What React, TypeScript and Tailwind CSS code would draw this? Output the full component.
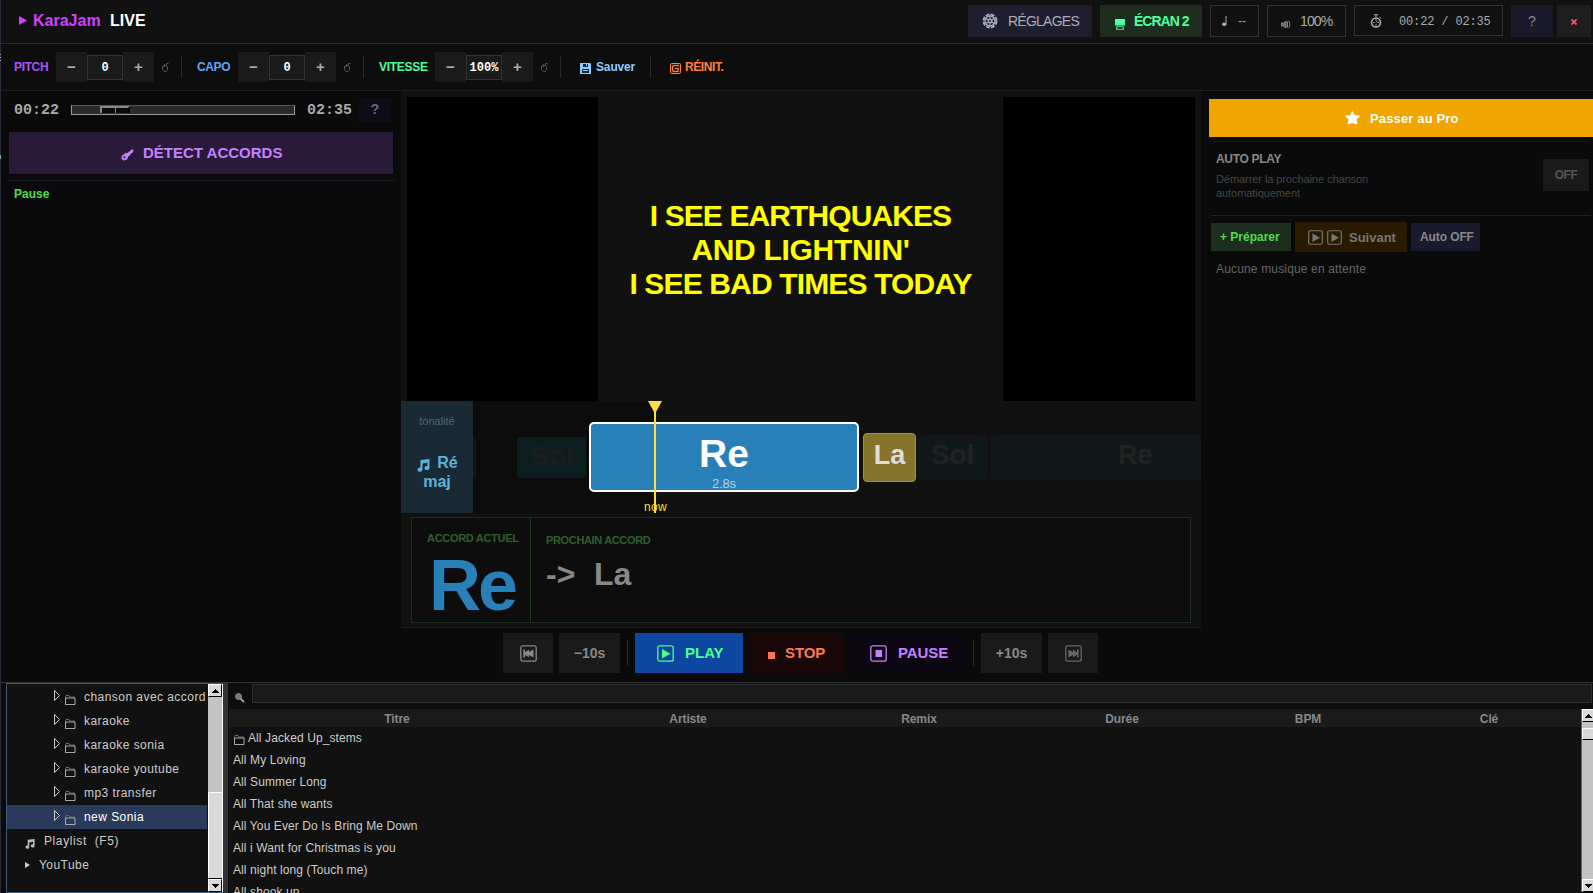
import React from "react";
import clsx from "clsx";

interface Track {
  title: string;
  folder?: boolean;
}

const FOLDERS = [
  "chanson avec accord",
  "karaoke",
  "karaoke sonia",
  "karaoke youtube",
  "mp3 transfer",
  "new Sonia",
];

const TRACKS: Track[] = [
  { title: "All Jacked Up_stems", folder: true },
  { title: "All My Loving" },
  { title: "All Summer Long" },
  { title: "All That she wants" },
  { title: "All You Ever Do Is Bring Me Down" },
  { title: "All i Want for Christmas is you" },
  { title: "All night long (Touch me)" },
  { title: "All shook up" },
];

const COLUMNS = ["Titre", "Artiste", "Remix", "Durée", "BPM", "Clé"];

const MONO = "font-['Liberation_Mono',monospace]";

/* ---------- icons ---------- */

function ResetIcon() {
  return (
    <svg width="7" height="9" viewBox="0 0 7 9" fill="none" stroke="#555" className="mt-px">
      <path d="M1.500 2.500H4.500V.5H6.500M4.500 2.500 5.500 3.500V6.500L4 8.500H2.500L.5 6.500V3.500H2.500V1" />
    </svg>
  );
}

function FlowerGearIcon() {
  return (
    <svg width="16" height="16" viewBox="0 0 16 16" fill="none" stroke="#aab">
      <circle cx="8" cy="8" r="6.500" strokeWidth="2" strokeDasharray="3.800 1.300" />
      <circle cx="8" cy="8" r="5" strokeWidth="1.300" />
      <circle cx="8" cy="8" r="1.800" strokeWidth="1.400" />
      <path d="M8 3v3.200M8 9.800V13M3.700 5.500l2.800 1.600M9.500 8.900l2.800 1.600M3.700 10.500l2.800-1.600M9.500 7.100l2.800-1.600" strokeWidth="1.200" />
    </svg>
  );
}

function ScreenIcon() {
  return (
    <svg width="10" height="11" viewBox="0 0 10 11" fill="#4dffa0">
      <path d="M0 0h10v6.500H0z" />
      <path d="M1.500 7h7v1h-7zM1 8h1.500v2h5V8H9v3H1z" opacity=".75" />
    </svg>
  );
}

function SpeakerIcon() {
  return (
    <svg width="10" height="9" viewBox="0 0 10 9" fill="none" stroke="#888">
      <path d="M.5 3h2L5 1v7L2.500 6h-2z" fill="#666" />
      <path d="M6.500 1.500v6M7.500 .8c1.800 1.500 1.800 6 0 7.400" />
    </svg>
  );
}

function StopwatchIcon() {
  return (
    <svg width="12" height="14" viewBox="0 0 12 14" fill="none" stroke="#aaa">
      <circle cx="6" cy="8.500" r="4.500" strokeWidth="1.600" />
      <path d="M4 .8h4M6 1v2.500M9.500 3l1.300 1.200M6 5v1.500M3 8.500h1.500M7.500 8.500H9M6 10.500V12M6 8.500l1.800-2" />
    </svg>
  );
}

function FloppyIcon() {
  return (
    <svg width="11" height="11" viewBox="0 0 11 11">
      <path d="M0 0h10l1 1v10H0z" fill="#8fcbff" />
      <path d="M3 1h5v3H3zM2 6h7v4H2z" fill="#14283c" />
      <path d="M6 1h1v2H6zM3 7h5v1H3z" fill="#8fcbff" />
    </svg>
  );
}

function ResetAllIcon() {
  return (
    <svg width="11" height="11" viewBox="0 0 11 11" fill="none" stroke="#ff8040">
      <rect x=".5" y=".5" width="10" height="10" rx="1" fill="#3a1c0c" />
      <path d="M9 2.500H3.500L2.500 3.500v4l1 1H8V5.500H5" strokeWidth="1.200" />
    </svg>
  );
}

function GuitarIcon() {
  return (
    <svg width="13" height="12" viewBox="0 0 13 12" fill="#c580ff">
      <path d="M12.500.800 11 .3 9.500 1.500 6 4.300 4.600 3.800 3.500 5 1.300 6.300.300 8.200l.5 2.200 2 1.200 2.400-.5L6.800 9.200l.4-1.700 1.300-.7L10 4.800l2-1.500z" />
      <circle cx="3.400" cy="8.300" r="1.200" fill="#5a3a7a" />
    </svg>
  );
}

function StarIcon() {
  return (
    <svg width="15" height="14" viewBox="0 0 15 14" fill="#fff" stroke="#fff" strokeWidth="1.400" strokeLinejoin="round">
      <path d="m7.500 1 1.900 3.700 4.600.6-3.200 3 .9 4.300-4.200-1.300-4.200 1.300.9-4.300-3.200-3 4.600-.6z" />
    </svg>
  );
}

function NoteIcon({ size, color }: { size: number; color: string }) {
  return (
    <svg width={size} height={size} viewBox="0 0 12 12" fill={color}>
      <path d="M3.200 1 11.500 0v8.300a2.300 1.900 0 1 1-1.900-1.800V3.300L5.100 4.200v5.600a2.300 1.900 0 1 1-1.900-1.800z" />
    </svg>
  );
}

function BoxedIcon({ color, kind, small }: { color: string; kind: "play" | "stop" | "prev" | "next"; small?: boolean }) {
  const s = small ? 15 : 17;
  return (
    <svg width={s} height={s} viewBox="0 0 17 17" fill={color} className="shrink-0">
      <rect x=".8" y=".8" width="15.400" height="15.400" rx="2" fill="none" stroke={color} strokeWidth="1.300" />
      {kind === "play" && <path d="M5 4v9.500l8.500-4.700z" />}
      {kind === "stop" && <path d="M5.500 5h6.500v7H5.500z" />}
      {kind === "prev" && <path d="M3.300 4.500h1.700v2.800L9 4.500v2.500l4.500-2.500v8L9 10v2.500L5 9.700v2.800H3.300z" />}
      {kind === "next" && <path d="M3.500 4.500 8 7V4.500l4 2.800V4.500h1.700v8H12V9.700l-4 2.800V10l-4.500 2.500z" />}
    </svg>
  );
}

function FolderIcon() {
  return (
    <svg width="11" height="10" viewBox="0 0 11 10" fill="none">
      <path d="M.5 9.500V1.500l.5-1h3l1 1.500h5" stroke="#666" />
      <path d="M.5 3h9.500v6.500H.5z" stroke="#aaa" />
    </svg>
  );
}

function MagnifierIcon() {
  return (
    <svg width="10" height="10" viewBox="0 0 10 10">
      <circle cx="3.500" cy="3.500" r="3" fill="#777" stroke="#888" />
      <path d="m5.500 5.500 3.500 3.700" stroke="#aaa" strokeWidth="1.800" />
    </svg>
  );
}

/* ---------- small parts ---------- */

function Divider() {
  return <div className="w-px h-[22px] bg-[#2a2a2a]" />;
}

function Stepper({ value }: { value: string }) {
  return (
    <div className="flex items-center ml-2">
      <div className="w-[31px] h-[30px] bg-[#1a1a1a] text-[#aaa] text-[15px] font-bold flex items-center justify-center">
        −
      </div>
      <div className={clsx(MONO, "w-9 h-[25px] pt-px bg-[#1a1a1a] border border-[#333] text-white text-[12px] font-bold flex items-center justify-center")}>
        {value}
      </div>
      <div className="w-[31px] h-[30px] bg-[#1a1a1a] text-[#aaa] text-[15px] font-bold flex items-center justify-center">
        +
      </div>
      <div className="w-[27px] pl-2">
        <ResetIcon />
      </div>
    </div>
  );
}

function ScrollArrow({ up, narrow }: { up?: boolean; narrow?: boolean }) {
  return (
    <div
      className={clsx(
        "h-[13px] shrink-0 bg-[#d9d9d9] border-t border-l border-t-white border-l-white border-b border-b-black flex items-center justify-center",
        !narrow && "border-r border-r-black"
      )}
    >
      <svg width="7" height="4" viewBox="0 0 7 4" fill="#000">
        <path d={up ? "M3 0h1v1h1v1h1v1h1v1H0V3h1V2h1V1h1z" : "M0 0h7v1H6v1H5v1H4v1H3V3H2V2H1V1H0z"} />
      </svg>
    </div>
  );
}

/* ---------- sections ---------- */

function Header() {
  return (
    <header className="h-11 shrink-0 bg-[#111] border-b border-[#2a2a2a] flex items-start pl-[18px] pr-[2px]">
      <div className="flex items-center h-[41px] text-[16px] font-bold">
        <svg width="8" height="9" viewBox="0 0 8 9" fill="#d040ff">
          <path d="M0 0v9l8-4.500z" />
        </svg>
        <span className="text-[#d040ff] ml-[6px] w-[77px]">KaraJam</span>
        <span className="text-white">LIVE</span>
      </div>
      <div className="flex ml-auto mt-[5px] h-8">
        <div className="w-[124px] h-8 mr-2 bg-[#1e1e2e] text-[#aab] text-[14px] flex items-center pl-[14px] gap-[10px] whitespace-nowrap">
          <FlowerGearIcon />
          <span className="tracking-[-0.75px]">RÉGLAGES</span>
        </div>
        <div className="w-[102px] h-8 mr-2 bg-[#1e2e1e] text-[#4dffa0] text-[14px] font-bold flex items-center pl-[15px] whitespace-nowrap">
          <span className="mt-[6px] mr-[9px]">
            <ScreenIcon />
          </span>
          <span className="tracking-[-1px]">ÉCRAN 2</span>
        </div>
        <div className="w-[49px] h-8 mr-2 border border-[#333] text-[#aaa] text-[12px] flex items-center pl-[11px]">
          <svg width="5" height="10" viewBox="0 0 5 10" fill="#aaa">
            <path d="M3.500 0h1v8.200A2.200 1.600 0 1 1 3.500 7z" />
          </svg>
          <span className="ml-[11px]">--</span>
        </div>
        <div className="w-[79px] h-8 mr-2 border border-[#333] text-[#aaa] text-[14px] flex items-center pl-[13px]">
          <span className="mt-[7px] mr-[9px]">
            <SpeakerIcon />
          </span>
          <span className="tracking-[-0.9px]">100%</span>
        </div>
        <div className={clsx(MONO, "w-[149px] h-[31px] mr-2 border border-[#333] text-[#aaa] text-[12px] flex items-center pl-[15px]")}>
          <StopwatchIcon />
          <span className="ml-[17px] mt-[2px] tracking-[-0.15px] whitespace-pre">00:22 / 02:35</span>
        </div>
        <div className="w-[42px] h-8 mr-1 bg-[#1a1a2a] text-[#888] text-[14px] flex items-center justify-center">?</div>
        <div className="w-[34px] h-8 bg-[#1e1e1e] flex items-center justify-center">
          <svg width="6" height="6" viewBox="0 0 6 6" stroke="#ff5555" strokeWidth="1.800" className="mt-px">
            <path d="m.5.5 5 5m0-5-5 5" />
          </svg>
        </div>
      </div>
    </header>
  );
}

function Toolbar() {
  return (
    <div className="h-[47px] shrink-0 bg-[#0d0d0d] border-b border-[#1e1e1e] flex items-center text-[12px] font-bold pl-[13px]">
      <span className="text-[#a855f7] w-[34px] tracking-[-0.35px]">PITCH</span>
      <Stepper value="0" />
      <Divider />
      <span className="text-[#60a5fa] ml-[15px] w-[33px] tracking-[-0.4px]">CAPO</span>
      <Stepper value="0" />
      <Divider />
      <span className="text-[#4dffa0] ml-[15px] w-12 tracking-[-0.3px]">VITESSE</span>
      <Stepper value="100%" />
      <Divider />
      <span className="ml-[19px] mt-[3px]">
        <FloppyIcon />
      </span>
      <span className="text-[#8fcbff] ml-[5px] w-[54px] tracking-[-0.15px]">Sauver</span>
      <Divider />
      <span className="ml-[19px] mt-[3px]">
        <ResetAllIcon />
      </span>
      <span className="text-[#ff8040] ml-1 tracking-[-0.4px]">RÉINIT.</span>
    </div>
  );
}

function LeftPanel() {
  return (
    <aside className="w-[400px] shrink-0 bg-[#0a0a0a] flex flex-col">
      <div className={clsx(MONO, "h-[30px] mt-[3px] flex items-center text-[15px] font-bold text-[#aaa] pl-[13px]")}>
        <span className="w-[57px] h-[14px] leading-[18px]">00:22</span>
        <div className="mt-px w-[224px] h-[10px] bg-[#2a2a2a] border border-t-[#555] border-l-[#999] border-b-[#999] border-r-[#999] pl-7 flex">
          <div className="w-[15px] h-[7px] bg-[#0a0a0a] border-t-2 border-l-2 border-[#888]" />
          <div className="w-[15px] h-[7px] bg-[#0a0a0a] border-t-2 border-t-[#888] border-l border-l-[#888] border-r-2 border-r-black" />
        </div>
        <span className="ml-3 w-[52px] h-[14px] leading-[18px]">02:35</span>
        <span className="mt-px pt-px w-8 h-6 bg-[#0d0d1a] text-[#667] text-[14px] flex items-center justify-center">?</span>
      </div>
      <div className="mt-2 mx-2 h-[42px] bg-[#2a1a3a] text-[#c580ff] text-[15px] font-bold flex items-center pl-[112px]">
        <span className="mt-[4px] mr-[9px]">
          <GuitarIcon />
        </span>
        <span>DÉTECT ACCORDS</span>
      </div>
      <div className="mt-[6px] mx-[6px] h-px bg-[#1a1a2a]" />
      <div className="pl-[13px] mt-[4px] text-[12px] leading-[18px] font-bold text-[#4ddd4d]">Pause</div>
    </aside>
  );
}

function Video() {
  return (
    <div className="h-[310px] shrink-0 pt-[6px] px-[6px] flex">
      <div className="w-[191px] bg-black" />
      <div className="flex-1 pt-[2px] flex flex-col items-center justify-center text-[30px] leading-[34px] font-bold text-[#ffff00] whitespace-nowrap">
        <span className="tracking-[-0.9px]">I SEE EARTHQUAKES</span>
        <span className="tracking-[-0.3px]">AND LIGHTNIN'</span>
        <span className="tracking-[-0.85px]">I SEE BAD TIMES TODAY</span>
      </div>
      <div className="w-[192px] bg-black" />
    </div>
  );
}

function ChordTimeline() {
  return (
    <div className="relative h-28 shrink-0 flex overflow-hidden">
      <div className="w-[72px] bg-[#1a2a35] text-[#5ab4dc] flex flex-col items-center">
        <span className="mt-3 text-[11px] leading-4 text-[#456878]">tonalité</span>
        <div className="mt-[24px] text-[16px] leading-[19px] font-bold flex items-center gap-[7px] pl-px">
          <span className="mt-[5px]">
            <NoteIcon size={13} color="#5ab4dc" />
          </span>
          Ré
        </div>
        <span className="text-[16px] leading-[19px] font-bold">maj</span>
      </div>
      <div className="w-[182px] bg-[#0c0c0c] flex items-center">
        <div className="w-[3px] h-[41px] bg-[#101719] rounded-r-sm" />
        <div className="ml-[41px] w-[69px] h-[41px] bg-[#0b1e20] rounded-sm text-[#1a1c1d] text-[28px] leading-[37px] font-bold text-center">
          Sol
        </div>
      </div>
      <div className="absolute left-[188px] top-[21px] w-[270px] h-[70px] rounded-[5px] border-2 border-white bg-[#2980b9] flex flex-col items-center text-white">
        <span className="mt-[8px] text-[39px] leading-[44px] font-bold">Re</span>
        <span className="text-[13px] leading-[15px] tracking-[-0.2px] text-[#b9d3e4]">2.8s</span>
      </div>
      <div className="absolute left-[462px] top-[32px] w-[53px] h-[49px] rounded-sm border border-[#a89035] bg-[#87742b] text-[#ddd] text-[27px] leading-[42px] font-bold text-center">
        La
      </div>
      <div className="absolute left-[517px] top-[34px] w-[69px] h-[45px] rounded-sm bg-[#10181a] text-[#222] text-[28px] leading-[40px] font-bold text-center">
        Sol
      </div>
      <div className="absolute left-[590px] top-[34px] w-[210px] h-[45px] rounded-l-sm bg-[#12171a] text-[#222] text-[27px] leading-[40px] font-bold pl-[127px]">
        Re
      </div>
      <div className="absolute left-[253px] top-0 w-[2px] h-28 bg-[#ffdc40]" />
      <svg width="14" height="11" viewBox="0 0 14 11" fill="#ffdc40" className="absolute left-[247px] top-0">
        <path d="M0 0h14L8 11H6z" />
      </svg>
      <span className="absolute left-[243px] top-[98px] text-[12px] leading-4 tracking-[0.3px] text-[#ffdc40]">now</span>
    </div>
  );
}

function ChordPanel() {
  return (
    <div className="mt-[4px] mx-[10px] h-[106px] shrink-0 border border-[#1e2e1e] bg-[#0d0d0d] flex font-bold">
      <div className="w-[119px] border-r border-[#1e3a1e] pl-[15px] pt-[13px]">
        <div className="text-[11px] leading-[15px] tracking-[-0.3px] text-[#2f5f2f] whitespace-nowrap">ACCORD ACTUEL</div>
        <div className="mt-px ml-[2px] text-[72px] leading-[76px] tracking-[-3px] text-[#2980b9]">Re</div>
      </div>
      <div className="pl-[15px] pt-[15px]">
        <div className="text-[11px] leading-[15px] tracking-[-0.35px] text-[#2f5f2f]">PROCHAIN ACCORD</div>
        <div className="mt-[7px] text-[32px] leading-[38px] text-[#888] flex">
          <span className="w-[48px]">-&gt;</span>
          <span>La</span>
        </div>
      </div>
    </div>
  );
}

function RightPanel() {
  return (
    <aside className="w-[392px] shrink-0 bg-[#0a0a0a]">
      <div className="ml-2 mt-2 h-[38px] bg-[#f0a500] text-white text-[13px] font-bold flex items-center pl-[136px]">
        <StarIcon />
        <span className="ml-[10px] mt-[2px] tracking-[0.15px]">Passer au Pro</span>
      </div>
      <div className="mt-1 ml-3 mr-1 h-px bg-[#1a1a1a]" />
      <div className="h-[73px] pl-[15px] pr-1 flex justify-between">
        <div className="pt-[9px]">
          <div className="text-[12px] leading-4 tracking-[-0.3px] font-bold text-[#888]">AUTO PLAY</div>
          <div className="mt-[5px] text-[11px] leading-[14px] tracking-[-0.07px] text-[#444]">
            Démarrer la prochaine chanson
            <br />
            automatiquement
          </div>
        </div>
        <div className="mt-[17px] w-[46px] h-8 bg-[#1a1a1a] text-[#555] text-[12px] tracking-[-0.5px] font-bold flex items-center justify-center">
          OFF
        </div>
      </div>
      <div className="ml-[10px] mr-[2px] h-px bg-[#222]" />
      <div className="mt-[6px] ml-[10px] flex items-center gap-1 font-bold whitespace-nowrap">
        <div className="w-[80px] h-7 bg-[#1e2e1e] text-[#4ddd4d] text-[12px] flex items-center pl-[9px]">+ Préparer</div>
        <div className="w-[112px] h-[30px] bg-[#2a1a00] text-[#777] text-[13px] flex items-center pl-[13px] gap-1">
          <BoxedIcon kind="play" color="#777" small />
          <BoxedIcon kind="play" color="#777" small />
          <span className="ml-[3px] mt-px">Suivant</span>
        </div>
        <div className="w-[69px] h-7 bg-[#1a1a2e] text-[#888] text-[12px] tracking-[-0.1px] flex items-center pl-[9px]">Auto OFF</div>
      </div>
      <div className="mt-2 pl-[15px] text-[12px] leading-[18px] text-[#666] tracking-[0.16px]">Aucune musique en attente</div>
    </aside>
  );
}

function Transport() {
  return (
    <div className="h-[54px] shrink-0 bg-[#0a0a0a] flex items-start pt-[5px] pl-[502px] text-[15px] font-bold whitespace-nowrap">
      <div className="w-[50px] h-10 bg-[#1a1a1a] flex items-center justify-center">
        <BoxedIcon kind="prev" color="#888" />
      </div>
      <div className="ml-[6px] w-[61px] h-10 bg-[#1a1a1a] text-[#888] text-[14px] flex items-center justify-center">−10s</div>
      <div className="ml-[7px] mt-[7px] w-px h-[26px] bg-[#2a2a2a]" />
      <div className="ml-[7px] w-[108px] h-10 bg-[#0d47a1] text-[#4dff88] flex items-center pl-[22px]">
        <BoxedIcon kind="play" color="#4dff88" />
        <span className="ml-[11px]">PLAY</span>
      </div>
      <div className="ml-[6px] w-[95px] h-10 bg-[#1a0808] text-[#ff7850] flex items-center pl-[19px]">
        <span className="w-[7px] h-[7px] bg-[#ff7850] mt-[4px]" />
        <span className="ml-[10px] tracking-[-0.1px]">STOP</span>
      </div>
      <div className="ml-[6px] w-[116px] h-10 bg-[#0d0714] text-[#c580ff] flex items-center pl-5">
        <BoxedIcon kind="stop" color="#c580ff" />
        <span className="ml-[11px] tracking-[-0.1px]">PAUSE</span>
      </div>
      <div className="ml-[7px] mt-[7px] w-px h-[26px] bg-[#2a2a2a]" />
      <div className="ml-[7px] w-[61px] h-10 bg-[#1a1a1a] text-[#888] text-[14px] flex items-center justify-center">+10s</div>
      <div className="ml-[6px] w-[50px] h-10 bg-[#1a1a1a] flex items-center justify-center">
        <BoxedIcon kind="next" color="#666" />
      </div>
    </div>
  );
}

function FolderTree() {
  return (
    <div className="w-[217px] shrink-0 ml-[5px] border border-r-0 border-[#3a5a78] bg-[#111] flex text-[12px] text-[#ccc] overflow-hidden">
      <div className="w-[200px] pt-px shrink-0 overflow-hidden whitespace-nowrap tracking-[0.45px]">
        {FOLDERS.map((name) => (
          <div
            key={name}
            className={clsx("h-6 flex items-center pl-[47px]", name === "new Sonia" && "bg-[#2a3a5a] text-white")}
          >
            <svg width="6" height="11" viewBox="0 0 6 11" fill="none" stroke="#ccc" className="mb-[3px]">
              <path d="M.5.5v10l5-5z" />
            </svg>
            <span className="ml-[5px] mt-[6px]">
              <FolderIcon />
            </span>
            <span className="ml-2">{name}</span>
          </div>
        ))}
        <div className="h-6 flex items-center pl-[18px]">
          <span className="mt-[5px] mr-[9px]">
            <NoteIcon size={10} color="#bbb" />
          </span>
          <span className="whitespace-pre tracking-[0.6px]">Playlist  (F5)</span>
        </div>
        <div className="h-6 flex items-center pl-[18px]">
          <svg width="5" height="6" viewBox="0 0 5 6" fill="#ccc">
            <path d="M0 0v6l5-3z" />
          </svg>
          <span className="ml-[9px]">YouTube</span>
        </div>
      </div>
      <div className="ml-px w-[15px] h-[208px] bg-[#c3c3c3] flex flex-col border-r border-white">
        <ScrollArrow up />
        <div className="mt-[95px] flex-1 bg-[#d9d9d9] border-t border-l border-white border-b border-b-black" />
        <ScrollArrow />
      </div>
    </div>
  );
}

function TrackTable() {
  return (
    <div className="flex-1 min-w-0 bg-[#0d0d0d] flex flex-col text-[12px]">
      <div className="h-[26px] shrink-0 flex items-start pl-[7px]">
        <span className="mt-[10px]">
          <MagnifierIcon />
        </span>
        <div className="ml-[7px] mt-[1px] mr-[1px] flex-1 h-[19px] bg-[#1a1a1a] border border-[#2e2e2e]" />
      </div>
      <div className="flex-1 flex min-h-0">
        <div className="w-[1352px] ml-px bg-[#111] overflow-hidden">
          <div className="h-[18px] bg-[#1a1a1a] text-[#888] font-bold grid grid-cols-[336px_246px_216px_190px_182px_180px] leading-[20px] text-center tracking-[-0.1px]">
            {COLUMNS.map((c) => (
              <span key={c}>{c}</span>
            ))}
          </div>
          {TRACKS.map((t) => (
            <div key={t.title} className="h-[22px] pl-1 flex items-center text-[#ccc] tracking-[0.1px] whitespace-nowrap">
              {t.folder && (
                <span className="mt-[4px] ml-[1px] mr-[3px]">
                  <FolderIcon />
                </span>
              )}
              {t.title}
            </div>
          ))}
        </div>
        <div className="flex-1 mb-[1px] bg-[#c3c3c3] border-l border-[#666] flex flex-col overflow-hidden">
          <ScrollArrow up narrow />
          <div className="mt-[6px] h-3 bg-[#d9d9d9] border-t border-l border-white border-b border-b-black" />
          <div className="flex-1" />
          <ScrollArrow narrow />
        </div>
      </div>
    </div>
  );
}

export default function App() {
  return (
    <div className="w-[1593px] h-[893px] overflow-hidden flex bg-[#0a0a0a] font-['Liberation_Sans',Arial,sans-serif]">
      <div className="w-px shrink-0 bg-[#2a2a3a]">
        <div className="mt-[54px] h-px bg-[#aaa]" />
        <div className="mt-[2px] h-px bg-[#aaa]" />
        <div className="mt-[2px] h-px bg-[#aaa]" />
        <div className="mt-[94px] h-1 bg-[#7ab]" />
      </div>
      <div className="flex-1 min-w-0 flex flex-col">
        <Header />
        <Toolbar />
        <div className="h-[537px] shrink-0 flex">
          <LeftPanel />
          <main className="w-[800px] shrink-0 bg-[#111] flex flex-col border-b border-[#1a1a2a]">
            <Video />
            <ChordTimeline />
            <ChordPanel />
          </main>
          <RightPanel />
        </div>
        <Transport />
        <div className="flex-1 min-h-0 border-t border-[#333] flex">
          <FolderTree />
          <div className="w-[5px] shrink-0 bg-[#333]" />
          <TrackTable />
        </div>
      </div>
    </div>
  );
}
